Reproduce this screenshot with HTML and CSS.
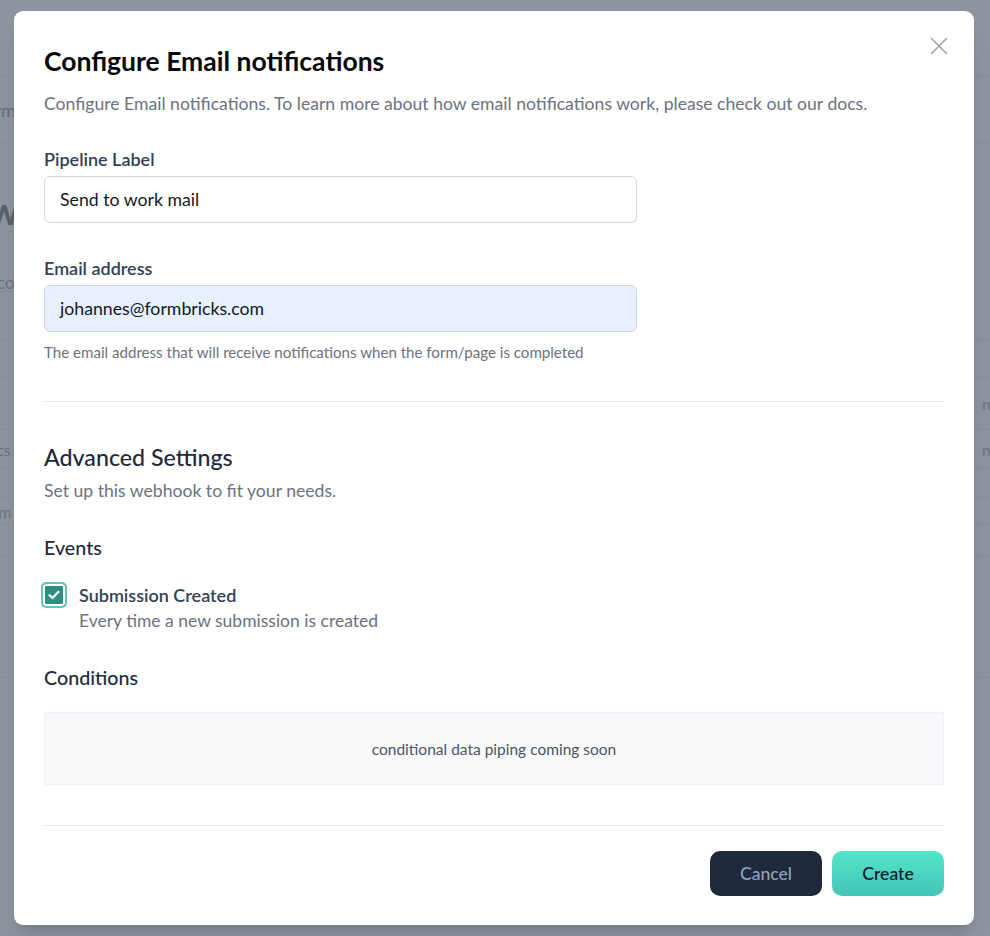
FILE: index.html
```html
<!DOCTYPE html>
<html lang="en">
<head>
<meta charset="utf-8">
<title>Configure Email notifications</title>
<link rel="stylesheet" href="styles.css">
</head>
<body>
<div class="page" aria-hidden="true">
  <div class="page-nav"></div>
  <div class="page-tabs"><span class="tab-text">Your forms</span></div>
  <div class="page-head"><span class="big">Workflows</span><span class="big-sub">You can connect</span></div>
  <div class="page-row row-a"></div>
  <div class="page-row row-b"><span class="pr">minutes</span></div>
  <div class="page-row row-c"><span class="pl">docs</span><span class="pr">minutes</span></div>
  <div class="page-row row-d"></div>
  <div class="page-row row-e"><span class="pl">form</span></div>
  <div class="page-row row-f"></div>
  <div class="page-row row-g"></div>
</div>
<div class="overlay"></div>

<div class="modal" role="dialog">
  <button class="close" aria-label="Close">
    <svg width="18" height="18" viewBox="0 0 18 18" fill="none" stroke="currentColor" stroke-width="1.5" stroke-linecap="round"><path d="M1.5 1.5 L16.5 16.5 M16.5 1.5 L1.5 16.5"/></svg>
  </button>
  <h1 class="title">Configure Email notifications</h1>
  <p class="subtitle">Configure Email notifications. To learn more about how email notifications work, please check out our docs.</p>

  <div class="field">
    <label class="label">Pipeline Label</label>
    <div class="input">Send to work mail</div>
  </div>

  <div class="field field-email">
    <label class="label">Email address</label>
    <div class="input input-auto">johannes@formbricks.com</div>
    <p class="help">The email address that will receive notifications when the form/page is completed</p>
  </div>

  <hr class="divider divider-1">

  <h2 class="section-title">Advanced Settings</h2>
  <p class="section-sub">Set up this webhook to fit your needs.</p>

  <h3 class="group-title">Events</h3>
  <div class="event">
    <span class="checkbox">
      <svg width="12" height="10" viewBox="0 0 12 10" fill="none" stroke="#fff" stroke-width="2.2" stroke-linecap="round" stroke-linejoin="round"><path d="M1.5 5.2 L4.5 8 L10.5 1.8"/></svg>
    </span>
    <div class="event-text">
      <div class="event-name">Submission Created</div>
      <div class="event-desc">Every time a new submission is created</div>
    </div>
  </div>

  <h3 class="group-title group-cond">Conditions</h3>
  <div class="soon">conditional data piping coming soon</div>

  <hr class="divider divider-2">

  <div class="actions">
    <button class="btn btn-cancel">Cancel</button>
    <button class="btn btn-create">Create</button>
  </div>
</div>
</body>
</html>
```

FILE: styles.css
```css
* { box-sizing: border-box; }
html, body { margin: 0; padding: 0; }
body {
  width: 990px;
  height: 936px;
  overflow: hidden;
  font-family: Lato, "Open Sans", sans-serif;
  background: #fff;
  position: relative;
}

/* background page (behind overlay) */
.page { width: 990px; color: #374151; overflow: hidden; }
.page-nav { height: 77px; border-bottom: 1px solid #e5e7eb; }
.page-tabs { height: 66px; border-bottom: 1px solid #e5e7eb; display: flex; align-items: center; margin-left: -62px; font-size: 18px; color: #4b5563; }
.page-head { height: 197px; border-bottom: 1px solid #e5e7eb; display: flex; flex-direction: column; padding-top: 44px; margin-left: -150px; }
.big { font-size: 38px; font-weight: 700; color: #1f2937; }
.big-sub { font-size: 18px; color: #6b7280; margin-top: 38px; margin-left: 80px; }
.page-row { border-bottom: 1px solid #e5e7eb; display: flex; justify-content: space-between; align-items: center; font-size: 16px; color: #6b7280; }
.row-a { height: 38px; }
.row-b { height: 52px; justify-content: flex-end; }
.row-c { height: 39px; }
.row-d { height: 29px; }
.row-e { height: 27px; }
.row-f { height: 32px; }
.row-g { height: 121px; }
.pl { margin-left: -22px; }
.pr { margin-right: -48px; }

.overlay {
  position: absolute;
  inset: 0;
  background: rgba(107, 114, 128, 0.76);
}

/* modal */
.modal {
  position: absolute;
  left: 14px;
  top: 11px;
  width: 960px;
  height: 914px;
  background: #fff;
  border-radius: 9px;
  box-shadow: 0 20px 25px -5px rgba(0,0,0,0.1), 0 8px 10px -6px rgba(0,0,0,0.1);
  padding: 33px 30px 0 30px;
  display: flex;
  flex-direction: column;
}
.close {
  position: absolute;
  right: 26px;
  top: 26px;
  border: 0;
  background: none;
  padding: 0;
  color: #9ca3af;
  width: 18px;
  height: 18px;
  display: flex;
}
.title {
  margin: 0;
  font-size: 26.5px;
  line-height: 34px;
  font-weight: 700;
  color: #05070c;
}
.subtitle {
  margin: 14px 0 0;
  font-size: 17.6px;
  line-height: 24px;
  color: #6b7280;
}
.field { margin-top: 31px; display: flex; flex-direction: column; }
.field-email { margin-top: 33px; }
.label {
  font-size: 18px;
  line-height: 24px;
  font-weight: 600;
  color: #334155;
}
.input {
  margin-top: 5px;
  width: 593px;
  height: 47px;
  border: 1px solid #d1d5db;
  border-radius: 6px;
  padding: 0 15px;
  display: flex;
  align-items: center;
  font-size: 17.7px;
  color: #111827;
  background: #fff;
}
.input-auto { background: #e8f0fe; }
.help {
  margin: 10px 0 0;
  font-size: 15.1px;
  line-height: 20px;
  color: #6b7280;
}
.divider {
  border: 0;
  border-top: 1px solid #e5e7eb;
  margin: 0;
  width: 900px;
}
.divider-1 { margin-top: 39px; }
.section-title {
  margin: 40px 0 0;
  font-size: 23.2px;
  line-height: 30px;
  font-weight: 500;
  color: #1e293b;
}
.section-sub {
  margin: 7px 0 0;
  font-size: 17.6px;
  line-height: 24px;
  color: #6b7280;
}
.group-title {
  margin: 32px 0 0;
  font-size: 19.7px;
  line-height: 26px;
  font-weight: 500;
  color: #1e293b;
}
.event { display: flex; gap: 12px; margin-top: 22px; }
.checkbox {
  margin-left: -3px;
  margin-top: -1px;
  width: 26px;
  height: 26px;
  border-radius: 5px;
  background: #2f8e7f;
  box-shadow: inset 0 0 0 2px #fff;
  border: 2px solid #5ccbb6;
  display: flex;
  align-items: center;
  justify-content: center;
  flex: none;
}
.event-text { display: flex; flex-direction: column; }
.event-name {
  font-size: 18px;
  line-height: 24px;
  font-weight: 600;
  color: #334155;
}
.event-desc {
  margin-top: 2px;
  font-size: 17.5px;
  line-height: 24px;
  color: #6b7280;
}
.group-cond { margin-top: 32px; }
.soon {
  margin-top: 21px;
  height: 73px;
  width: 900px;
  background: #f8f9fb;
  border: 1px solid #eef0f3;
  border-radius: 2px;
  display: flex;
  align-items: center;
  justify-content: center;
  font-size: 15.5px;
  color: #4b5563;
}
.divider-2 { margin-top: 40px; }
.actions {
  margin-top: 25px;
  display: flex;
  justify-content: flex-end;
  gap: 10px;
}
.btn {
  width: 112px;
  height: 45px;
  border: 0;
  border-radius: 10px;
  font-family: inherit;
  font-size: 17.6px;
  font-weight: 500;
}
.btn-cancel { background: #1e293b; color: #8ea2c0; }
.btn-create { background: linear-gradient(180deg, #52e5c8 0%, #43c4b8 100%); color: #0f172a; }
```
